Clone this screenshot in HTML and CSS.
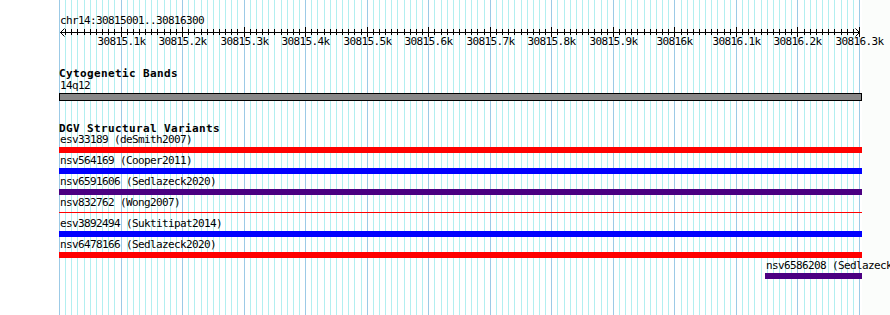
FILE: index.html
```html
<!DOCTYPE html>
<html lang="en">
  <head>
    <meta charset="UTF-8" />
    <title>chr14:30815001..30816300</title>
    <link rel="stylesheet" href="styles.css">
  </head>
  <body>
    <div class="canvas">
      <svg class="grid" id="grid" width="862" height="315"></svg>

      <div class="ruler">
        <div class="ruler-title">chr14:30815001..30816300</div>
        <svg class="scale" id="scale" width="890" height="21"></svg>
      </div>

      <div class="track cyto">
        <div class="track-title">Cytogenetic Bands</div>
        <div class="feature">
          <div class="label">14q12</div>
          <div class="band"></div>
        </div>
      </div>

      <div class="track dgv">
        <div class="track-title">DGV Structural Variants</div>
        <div class="feature">
          <div class="label">esv33189 (deSmith2007)</div>
          <div class="bar red"></div>
        </div>
        <div class="feature">
          <div class="label">nsv564169 (Cooper2011)</div>
          <div class="bar blue"></div>
        </div>
        <div class="feature">
          <div class="label">nsv6591606 (Sedlazeck2020)</div>
          <div class="bar indigo"></div>
        </div>
        <div class="feature">
          <div class="label">nsv832762 (Wong2007)</div>
          <div class="bar red thin"></div>
        </div>
        <div class="feature">
          <div class="label">esv3892494 (Suktitipat2014)</div>
          <div class="bar blue"></div>
        </div>
        <div class="feature">
          <div class="label">nsv6478166 (Sedlazeck2020)</div>
          <div class="bar red"></div>
        </div>
        <div class="feature" style="margin-left: 706px">
          <div class="label">nsv6586208 (Sedlazeck2020)</div>
          <div class="bar indigo"></div>
        </div>
      </div>
    </div>

    <script>
      const ns = "http://www.w3.org/2000/svg";
      const grid = document.getElementById("grid");
      const scale = document.getElementById("scale");

      function line(parent, x1, y1, x2, y2, color) {
        const l = document.createElementNS(ns, "line");
        l.setAttribute("x1", x1);
        l.setAttribute("y1", y1);
        l.setAttribute("x2", x2);
        l.setAttribute("y2", y2);
        l.setAttribute("stroke", color);
        parent.appendChild(l);
      }

      // axis + arrow heads
      line(scale, 60, 5.5, 860, 5.5, "#000");
      const arrows = document.createElementNS(ns, "path");
      arrows.setAttribute("d", "M64.5 1.5 L60.5 5.5 L64.5 9.5 M855.5 1.5 L859.5 5.5 L855.5 9.5");
      arrows.setAttribute("stroke", "#000");
      arrows.setAttribute("fill", "none");
      scale.appendChild(arrows);

      // 10bp minor, 100bp major
      for (let k = 0; k <= 130; k++) {
        const x = Math.floor(59.5 + (k * 800) / 130) + 0.5;
        const major = k % 10 === 0;
        line(grid, x, 0, x, 315, major ? "#9ccae6" : "#b2eff0");
        if (k === 0) continue;
        line(scale, x, major ? 0 : 2, x, major ? 10 : 8, "#000");
        if (major) {
          const t = document.createElementNS(ns, "text");
          t.setAttribute("x", x);
          t.setAttribute("y", 18);
          t.setAttribute("text-anchor", "middle");
          t.setAttribute("fill", "#000");
          t.textContent = Number(((30815000 + k * 10) / 1000).toFixed(1)) + "k";
          scale.appendChild(t);
        }
      }
    </script>
  </body>
</html>
```

FILE: styles.css
```css
* {
  margin: 0;
  padding: 0;
  box-sizing: border-box;
}

body {
  width: 890px;
  height: 315px;
  overflow: hidden;
  background: #fbfdfb;
  font-family: "DejaVu Sans Mono", monospace;
  font-size: 11px;
  letter-spacing: -0.62px;
  color: #000;
}

.canvas {
  position: relative;
  width: 862px;
  height: 315px;
  background: #fff;
}

.grid {
  position: absolute;
  top: 0;
  left: 0;
}

.ruler {
  position: relative;
  padding-top: 15px;
}

.ruler-title {
  margin-left: 60px;
  line-height: 12px;
}

.scale {
  display: block;
  overflow: visible;
}

.track {
  position: relative;
  margin-left: 59px;
  width: 803px;
}

.track-title {
  font-weight: bold;
  letter-spacing: 0.38px;
  line-height: 12px;
}

.cyto {
  margin-top: 20px;
}

.dgv {
  margin-top: 22px;
}

.dgv .track-title {
  margin-bottom: -1px;
}

.label {
  line-height: 12px;
  padding-left: 1px;
  white-space: nowrap;
}

.band {
  height: 8px;
  margin-top: 1px;
  background: #888888;
  border: 1px solid #000;
}

.bar {
  height: 6px;
  margin-top: 1px;
  margin-bottom: 2px;
}

.bar.thin {
  height: 1px;
  margin-top: 3px;
  margin-bottom: 5px;
}

.red {
  background: #ff0000;
}

.blue {
  background: #0000ff;
}

.indigo {
  background: #4b0082;
}
```
